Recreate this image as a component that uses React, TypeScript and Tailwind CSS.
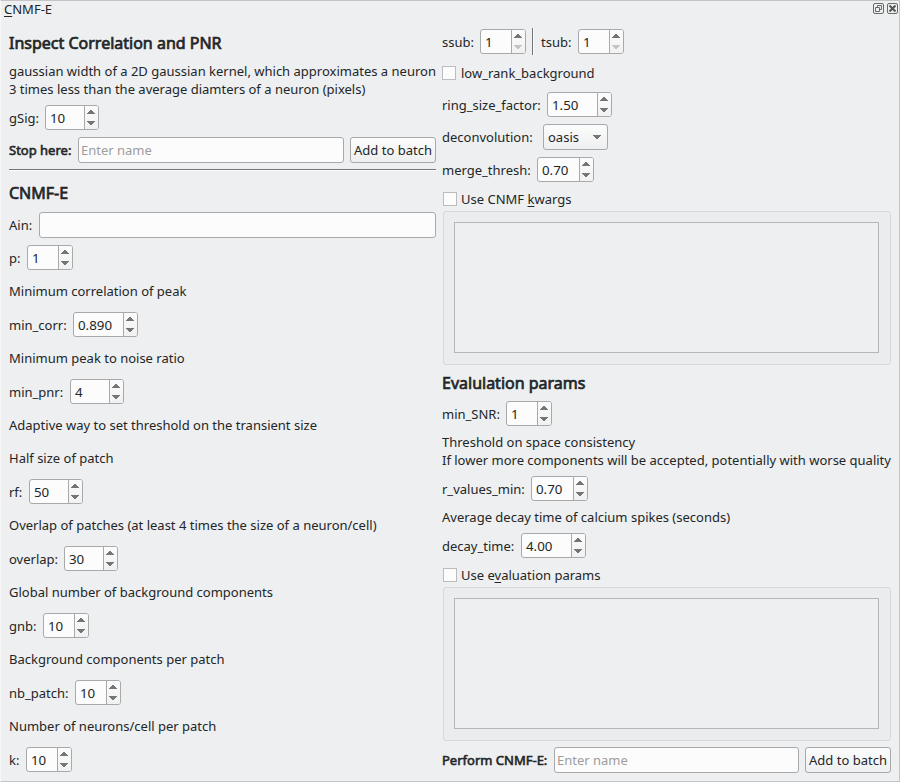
import type { ReactNode } from "react";

function Spin({ value, width, lowOff = false }: { value: string; width: string; lowOff?: boolean }) {
  return (
    <div className={`flex h-[25px] shrink-0 overflow-hidden rounded-[3px] border border-[#a8a9aa] bg-[#fcfcfc] ${width}`}>
      <div className="flex flex-1 items-center pl-[4px] text-[13.333px] leading-[18px]">{value}</div>
      <div className="flex w-[14px] shrink-0 items-center justify-center border-l border-[#a8a9aa] bg-linear-to-b from-[#fcfcfc] to-[#f1f1f2]">
        <svg width="9" height="23" viewBox="0 0 9 23" shapeRendering="crispEdges">
          <path d="M3 4h2v1h1v1h1v1h1v1H0V7h1V6h1V5h1z" fill="#747675" />
          <path d="M0 15h8v1h-1v1h-1v1h-1v1H3v-1h-1v-1h-1v-1H0z" fill={lowOff ? "#c3c4c4" : "#747675"} />
        </svg>
      </div>
    </div>
  );
}

function Field({ label, labelWidth, value, width, className = "" }: { label: string; labelWidth: string; value: string; width: string; className?: string }) {
  return (
    <div className={`flex h-[25px] items-center ${className}`}>
      <span className={`shrink-0 ${labelWidth}`}>{label}</span>
      <Spin value={value} width={width} />
    </div>
  );
}

function Check({ children, className = "" }: { children: ReactNode; className?: string }) {
  return (
    <div className={`flex h-[14px] items-center ${className}`}>
      <span className="size-[14px] shrink-0 border border-[#bbbcbd] bg-[#fcfcfc]" />
      {children}
    </div>
  );
}

function Heading({ children, className }: { children: ReactNode; className: string }) {
  return (
    <h1 className={`h-[24px] text-[16px] font-normal leading-[24px] [-webkit-text-stroke:0.7px_#232627] ${className}`}>{children}</h1>
  );
}

function Group({ className = "" }: { className?: string }) {
  return (
    <div className={`ml-px h-[154px] w-[448px] rounded-[3px] border border-[#d6d7d8] bg-[#ebecee] p-[10px] pb-[11px] pr-[11px] ${className}`}>
      <div className="h-full border border-[#b5b6b7] bg-[#eeeff1]" />
    </div>
  );
}

function Input({ className, placeholder = "" }: { className: string; placeholder?: string }) {
  return (
    <div className={`flex h-[26px] shrink-0 items-center rounded-[3px] border border-[#a8a9aa] bg-[#fcfcfc] pl-[2px] text-[#9c9d9e] ${className}`}>
      {placeholder}
    </div>
  );
}

function Button() {
  return (
    <div className="ml-[6px] flex h-[26px] w-[86px] shrink-0 items-center justify-center rounded-[3px] border border-[#a8a9aa] bg-linear-to-b from-[#fcfcfc] to-[#eeeff0]">
      Add to batch
    </div>
  );
}

function Note({ children, className = "h-[42px]" }: { children: ReactNode; className?: string }) {
  return <div className={`flex items-center ${className}`}>{children}</div>;
}

export default function App() {
  return (
    <div className="flex h-[782px] w-[900px] flex-col overflow-hidden whitespace-nowrap border border-[#c4c5c6] border-l-[#f8f8f8] bg-[#eeeff1] font-['Noto_Sans',sans-serif] text-[13px] leading-[18px] text-[#232627]">
      <div className="flex h-[15px] items-center justify-between pl-[3px] pr-px">
        <span><span className="underline decoration-1 underline-offset-2">C</span>NMF-E</span>
        <span className="flex gap-[3px]">
          <svg width="11" height="11" viewBox="0 0 11 11" fill="none" stroke="#6b6c68">
            <rect x=".5" y=".5" width="10" height="10" rx="1.5" />
            <path d="M4.5 4V2.5h4v4H7M2.5 4.5h4v4h-4z" />
          </svg>
          <svg width="11" height="11" viewBox="0 0 11 11" fill="none" stroke="#6b6c68">
            <rect x=".5" y=".5" width="10" height="10" rx="1.5" />
            <path d="M2.5 2.5l6 6M8.5 2.5l-6 6" strokeWidth="2" stroke="#555652" />
          </svg>
        </span>
      </div>
      <div className="flex pt-[2px]">
        <div className="ml-[8px] flex w-[433px] flex-col">
          <Heading className="mt-[13px]">Inspect Correlation and PNR</Heading>
          <div className="mt-[7px] h-[43px]">
            gaussian width of a 2D gaussian kernel, which approximates a neuron
            <br />3 times less than the average diamters of a neuron (pixels)
          </div>
          <Field label="gSig:" labelWidth="w-[36px]" value="10" width="w-[54px]" />
          <div className="mt-[7px] flex h-[26px] items-center">
            <span className="w-[69px] shrink-0 [-webkit-text-stroke:0.6px_#232627]">Stop here:</span>
            <Input className="w-[266px]" placeholder="Enter name" />
            <Button />
          </div>
          <div className="mt-[6px] h-[2px] w-[427px] border-b border-t border-b-[#fcfcfc] border-t-[#747576]" />
          <Heading className="mt-[10px]">CNMF-E</Heading>
          <div className="mt-[7px] flex h-[26px] items-center">
            <span className="w-[30px]">Ain:</span>
            <Input className="w-[397px]" />
          </div>
          <Field className="mt-[7px]" label="p:" labelWidth="w-[18px]" value="1" width="w-[46px]" />
          <Note>Minimum correlation of peak</Note>
          <Field label="min_corr:" labelWidth="w-[64px]" value="0.890" width="w-[65px]" />
          <Note>Minimum peak to noise ratio</Note>
          <Field label="min_pnr:" labelWidth="w-[61px]" value="4" width="w-[54px]" />
          <Note>Adaptive way to set threshold on the transient size</Note>
          <Note className="h-[24px]">Half size of patch</Note>
          <Field className="mt-[9px]" label="rf:" labelWidth="w-[20px]" value="50" width="w-[54px]" />
          <Note>Overlap of patches (at least 4 times the size of a neuron/cell)</Note>
          <Field label="overlap:" labelWidth="w-[55px]" value="30" width="w-[54px]" />
          <Note>Global number of background components</Note>
          <Field label="gnb:" labelWidth="w-[34px]" value="10" width="w-[46px]" />
          <Note>Background components per patch</Note>
          <Field label="nb_patch:" labelWidth="w-[66px]" value="10" width="w-[46px]" />
          <Note>Number of neurons/cell per patch</Note>
          <Field label="k:" labelWidth="w-[17px]" value="10" width="w-[46px]" />
        </div>
        <div className="flex w-[449px] flex-col">
          <div className="mt-[10px] flex h-[27px] items-center">
            <span className="w-[38px]">ssub:</span>
            <Spin value="1" width="w-[46px]" lowOff />
            <div className="ml-[6px] h-[27px] w-[2px] border-l border-r border-l-[#747576] border-r-[#fcfcfc]" />
            <span className="ml-[7px] w-[37px]">tsub:</span>
            <Spin value="1" width="w-[46px]" lowOff />
          </div>
          <Check className="mt-[11px]"><span className="ml-[5px]">low_rank_background</span></Check>
          <Field className="mt-[12px]" label="ring_size_factor:" labelWidth="w-[105px]" value="1.50" width="w-[65px]" />
          <div className="mt-[7px] flex h-[26px] items-center">
            <span className="w-[101px]">deconvolution:</span>
            <div className="flex h-[26px] w-[65px] items-center justify-between rounded-[3px] border border-[#a8a9aa] bg-linear-to-b from-[#fcfcfc] to-[#eeeff0] pl-[4px] pr-[6px]">
              oasis
              <svg width="8" height="4" viewBox="0 0 8 4" shapeRendering="crispEdges"><path d="M0 0h8v1h-1v1h-1v1h-1v1H3v-1h-1v-1h-1v-1H0z" fill="#747675" /></svg>
            </div>
          </div>
          <Field className="mt-[7px]" label="merge_thresh:" labelWidth="w-[95px]" value="0.70" width="w-[57px]" />
          <Check className="ml-px mt-[10px]">
            <span className="ml-[4px]">Use CNMF <span className="underline decoration-1 underline-offset-2">k</span>wargs</span>
          </Check>
          <Group className="mt-[5px]" />
          <Heading className="mt-[6px]">Evalulation params</Heading>
          <Field className="mt-[6px]" label="min_SNR:" labelWidth="w-[64px]" value="1" width="w-[46px]" />
          <div className="mt-[7px] h-[43px]">
            Threshold on space consistency
            <br />If lower more components will be accepted, potentially with worse quality
          </div>
          <Field label="r_values_min:" labelWidth="w-[89px]" value="0.70" width="w-[57px]" />
          <Note className="h-[32px]">Average decay time of calcium spikes (seconds)</Note>
          <Field label="decay_time:" labelWidth="w-[79px]" value="4.00" width="w-[65px]" />
          <Check className="ml-px mt-[10px]">
            <span className="ml-[4px]">Use e<span className="underline decoration-1 underline-offset-2">v</span>aluation params</span>
          </Check>
          <Group className="mt-[5px]" />
          <div className="mt-[6px] flex h-[26px] items-center">
            <span className="w-[112px] shrink-0 [-webkit-text-stroke:0.6px_#232627]">Perform CNMF-E:</span>
            <Input className="w-[245px]" placeholder="Enter name" />
            <Button />
          </div>
        </div>
      </div>
    </div>
  );
}
